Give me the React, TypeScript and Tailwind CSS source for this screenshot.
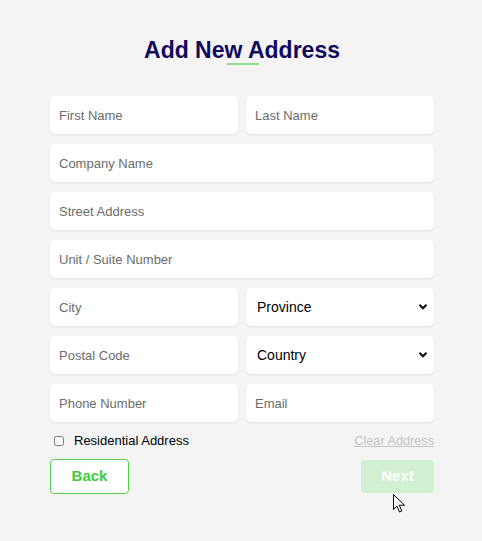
import React, { useState } from 'react';

const font = { fontFamily: '"Liberation Sans", Arial, sans-serif' };

const inputCls =
  'h-[38px] w-full rounded-[5px] bg-white pl-[9px] pr-2 text-[13px] text-black placeholder:text-[#6b6b6b] shadow-[0_1px_2px_rgba(0,0,0,0.08)] outline-none';

const Field: React.FC<{ placeholder: string }> = ({ placeholder }) => (
  <input className={inputCls} placeholder={placeholder} style={font} />
);

const SelectField: React.FC<{ label: string }> = ({ label }) => (
  <div className="relative">
    <select
      className={`${inputCls} appearance-none pl-[11px] text-[14px]`}
      style={font}
      defaultValue=""
    >
      <option value="">{label}</option>
    </select>
    <svg
      className="pointer-events-none absolute right-[6px] top-[15px]"
      width="10"
      height="8"
      viewBox="0 0 10 8"
    >
      <path d="M1.5 1.8 L5 5.3 L8.5 1.8" fill="none" stroke="#111" strokeWidth="2.2" />
    </svg>
  </div>
);

const App: React.FC = () => {
  const [residential, setResidential] = useState(false);

  return (
    <div className="relative min-h-[541px] w-full bg-[#f4f4f4] pl-[50px]" style={font}>
      <div className="flex w-[384px] flex-col pt-[35px]">
        {/* Heading */}
        <div className="flex flex-col items-center">
          <h1 className="text-[23px] font-bold leading-[30px] text-[#0f0a5c]">Add New Address</h1>
          <div className="ml-[2px] mt-[-2px] h-[2px] w-[32px] bg-[#8ee08e]" />
        </div>

        {/* Form */}
        <div className="mt-[31px] flex flex-col gap-[10px]">
          <div className="grid grid-cols-2 gap-[8px]">
            <Field placeholder="First Name" />
            <Field placeholder="Last Name" />
          </div>
          <Field placeholder="Company Name" />
          <Field placeholder="Street Address" />
          <Field placeholder="Unit / Suite Number" />
          <div className="grid grid-cols-2 gap-[8px]">
            <Field placeholder="City" />
            <SelectField label="Province" />
          </div>
          <div className="grid grid-cols-2 gap-[8px]">
            <Field placeholder="Postal Code" />
            <SelectField label="Country" />
          </div>
          <div className="grid grid-cols-2 gap-[8px]">
            <Field placeholder="Phone Number" />
            <Field placeholder="Email" />
          </div>
        </div>

        {/* Options */}
        <div className="mt-[9px] flex items-center justify-between">
          <label className="flex items-center pl-[4px] text-[13px] text-black">
            <input
              type="checkbox"
              checked={residential}
              onChange={(e) => setResidential(e.target.checked)}
              className="m-0 h-[10px] w-[10px]"
            />
            <span className="ml-[10px] leading-[20px]">Residential Address</span>
          </label>
          <button className="text-[12.7px] leading-[18px] text-[#c4c4c4] underline">Clear Address</button>
        </div>

        {/* Actions */}
        <div className="mt-[8px] flex items-start justify-between">
          <button className="h-[35px] w-[79px] rounded-[4px] border border-[#52d152] bg-white text-[15px] font-bold text-[#3fcc3f]">
            Back
          </button>
          <button className="mt-[1px] h-[33px] w-[73px] rounded-[4px] bg-[#d1efd1] text-[15px] font-bold text-white">
            Next
          </button>
        </div>
      </div>

      {/* mouse cursor */}
      <svg className="pointer-events-none absolute left-[393px] top-[494px]" width="13" height="20" viewBox="0 0 13 20">
        <path
          d="M0.5 0.5 L0.5 15.5 L4 12 L6.5 18 L8.8 17 L6.3 11.2 L11.5 11.2 Z"
          fill="#fff"
          stroke="#000"
          strokeWidth="1"
          strokeLinejoin="miter"
        />
      </svg>
    </div>
  );
};

export default App;
